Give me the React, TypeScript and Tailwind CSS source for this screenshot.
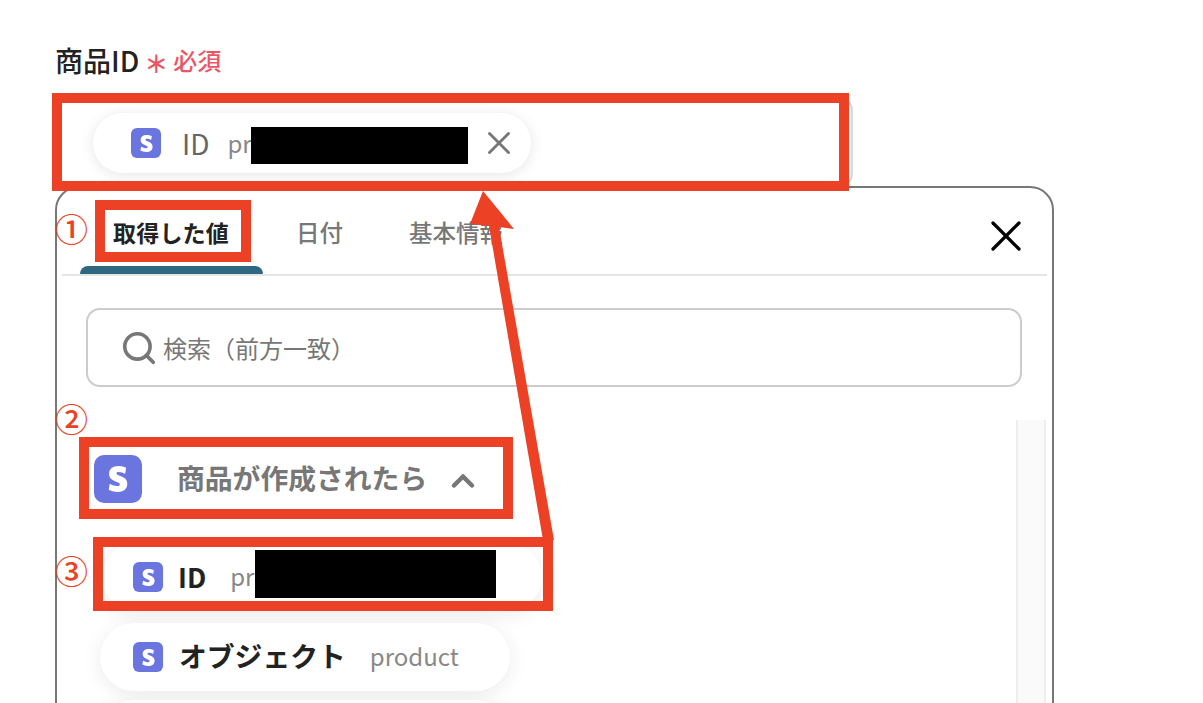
import { ChevronUp, Search, X } from "lucide-react";

function StripeIcon({ className, glyph }: { className: string; glyph: string }) {
  return (
    <span className={`flex shrink-0 items-center justify-center bg-[#6b75e0] ${className}`}>
      <svg className={glyph} viewBox="0 0 24 24" fill="#fff">
        <path d="M13.976 9.15c-2.172-.806-3.356-1.426-3.356-2.409 0-.831.683-1.305 1.901-1.305 2.227 0 4.515.858 6.09 1.631l.89-5.494C18.252.975 15.697 0 12.165 0 9.667 0 7.589.654 6.104 1.872 4.56 3.147 3.757 4.992 3.757 7.218c0 4.039 2.467 5.76 6.476 7.219 2.585.92 3.445 1.574 3.445 2.583 0 .98-.84 1.545-2.354 1.545-1.875 0-4.965-.921-6.99-2.109l-.9 5.555C5.175 22.99 8.385 24 11.714 24c2.641 0 4.843-.624 6.328-1.813 1.664-1.305 2.525-3.236 2.525-5.732 0-4.128-2.524-5.851-6.594-7.305h.003z" />
      </svg>
    </span>
  );
}

function Annotations() {
  return (
    <>
      {/* red call-out boxes */}
      <div className="absolute left-[52px] top-[93px] h-[98px] w-[797px] border-[10px] border-[#ec4125]" />
      <div className="absolute left-[95px] top-[200px] h-[62px] w-[156px] border-[10px] border-[#ec4125]" />
      <div className="absolute left-[79px] top-[437px] h-[82px] w-[434px] border-[10px] border-[#ec4125]" />
      <div className="absolute left-[93px] top-[537px] h-[74px] w-[460px] border-[10px] border-[#ec4125]" />

      {/* numbers */}
      <span className="absolute left-[55px] top-[206px] text-[33px] font-medium leading-[44px] text-[#ec4125]">①</span>
      <span className="absolute left-[55px] top-[396px] text-[33px] font-medium leading-[44px] text-[#ec4125]">②</span>
      <span className="absolute left-[55px] top-[548px] text-[33px] font-medium leading-[44px] text-[#ec4125]">③</span>

      {/* arrow */}
      <svg className="absolute left-0 top-0" width="1203" height="703" fill="#ec4125">
        <polygon points="483,191 514,229 499,227 554,540 543,540 489,226 470,224" />
      </svg>
    </>
  );
}

export default function App() {
  return (
    <div className="relative h-[703px] w-[1203px] overflow-hidden bg-white font-['Noto_Sans_CJK_JP',sans-serif] text-[#222]">
      <div className="pl-[55px] pt-[42px]">
        {/* label */}
        <div className="flex h-[36px] items-center">
          <span className="text-[28px] font-medium leading-[36px]">商品ID</span>
          <span className="ml-[5px] mt-[6px] w-[28px] text-[24px] font-bold leading-[36px] text-[#ec5566]">＊</span>
          <span className="ml-[1px] text-[24px] font-medium leading-[36px] text-[#ec5566]">必須</span>
        </div>

        {/* input with chip */}
        <div className="mt-[20px] flex h-[88px] w-[798px] items-center rounded-[12px] border-2 border-[#d5d9e0] pl-[36px] pt-[2px]">
          <div className="flex h-[60px] w-[438px] items-center rounded-full bg-white pl-[38px] shadow-[0_2px_14px_rgba(0,0,0,0.1)]">
            <StripeIcon className="size-[30px] rounded-[6px]" glyph="size-[17px]" />
            <span className="ml-[21px] mb-[1px] text-[28px] leading-none text-[#666]">ID</span>
            <span className="ml-[18px] w-[24px] text-[24px] leading-none text-[#888]">pr</span>
            <span className="mt-[5px] h-[37px] w-[217px] bg-black" />
            <X className="ml-[12px] size-[38px] text-[#777]" strokeWidth={1.8} />
          </div>
        </div>

        {/* popup */}
        <div className="h-[600px] w-[999px] rounded-[24px] border-2 border-[#777] bg-white">
          <div className="relative mx-[5px] flex h-[88px] items-center border-b-2 border-[#e5e5e5] pl-[51px] pt-[3px]">
            <span className="text-[23px] font-bold leading-none tracking-[0.2px]">取得した値</span>
            <span className="ml-[67px] text-[23.5px] font-medium leading-none text-[#777]">日付</span>
            <span className="ml-[66px] text-[23.5px] font-medium leading-none text-[#777]">基本情報</span>
            <div className="absolute bottom-0 left-[18px] h-[8px] w-[183px] rounded-t-[8px] bg-[#2d6880]" />
            <X className="absolute right-[15px] top-[22px] size-[52px] text-black" strokeWidth={1.5} />
          </div>

          <div className="relative">
            {/* search */}
            <div className="ml-[29px] mt-[32px] flex h-[79px] w-[936px] items-center rounded-[14px] border-2 border-[#ccc] pl-[32px]">
              <Search className="size-[38px] text-[#777]" strokeWidth={2.3} />
              <span className="ml-[5px] text-[24px] leading-none text-[#777]">検索（前方一致）</span>
            </div>

            {/* list */}
            <div className="mt-[33px] flex h-[400px]">
              <div className="flex-1 pl-[37px] pt-[35px]">
                <div className="flex h-[48px] items-center">
                  <StripeIcon className="size-[48px] rounded-[10px]" glyph="size-[26px]" />
                  <span className="mb-[3px] ml-[35px] text-[27.8px] font-bold leading-none text-[#777]">商品が作成されたら</span>
                  <ChevronUp className="ml-[18px] mt-[3px] size-[36px] text-[#777]" strokeWidth={3} />
                </div>

                <div className="ml-[8px] mt-[40px] flex h-[68px] w-[440px] items-center rounded-full bg-white pl-[31px] shadow-[0_4px_20px_rgba(0,0,0,0.08)]">
                  <StripeIcon className="size-[30px] rounded-[6px]" glyph="size-[17px]" />
                  <span className="mb-[2px] ml-[15px] text-[27px] font-bold leading-none">ID</span>
                  <span className="mb-[2px] ml-[24px] w-[25px] text-[24px] leading-none text-[#888]">pr</span>
                  <span className="-mt-[6px] h-[48px] w-[241px] bg-black" />
                </div>

                <div className="ml-[6px] mt-[12px] flex h-[68px] w-[410px] items-center rounded-full bg-white pl-[33px] shadow-[0_4px_20px_rgba(0,0,0,0.08)]">
                  <StripeIcon className="size-[30px] rounded-[6px]" glyph="size-[17px]" />
                  <span className="mb-[3px] ml-[16px] text-[27.8px] font-bold leading-none">オブジェクト</span>
                  <span className="mb-[3px] ml-[24px] text-[24px] leading-none text-[#888]">product</span>
                </div>

                <div className="ml-[6px] mt-[9px] h-[68px] w-[410px] rounded-full bg-white shadow-[0_4px_20px_rgba(0,0,0,0.08)]" />
              </div>

              <div className="mr-[6px] w-[30px] border-x-2 border-[#eee] bg-[#fafafa]" />
            </div>
          </div>
        </div>
      </div>

      <Annotations />
    </div>
  );
}
